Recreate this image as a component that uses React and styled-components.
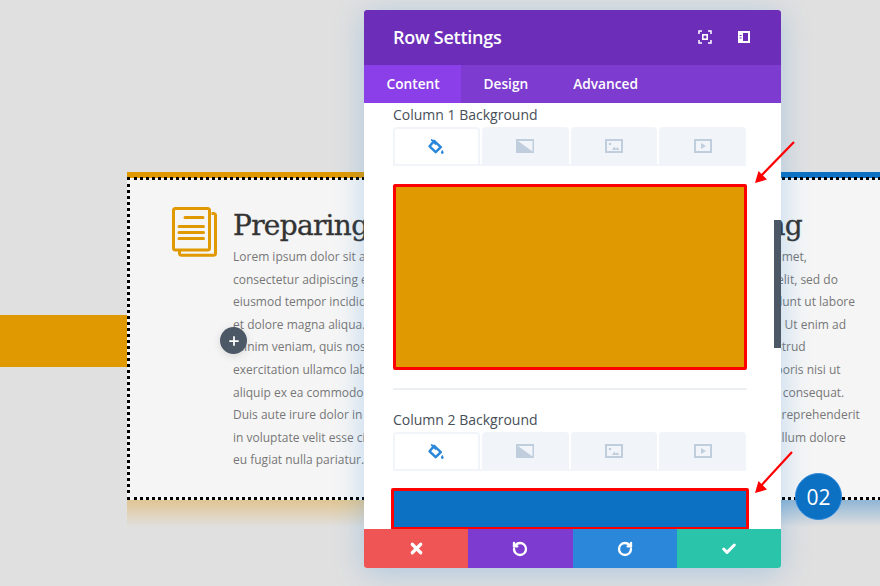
import React from "react";
import styled, { createGlobalStyle } from "styled-components";
import { X, RotateCcw, RotateCw, Check, Plus } from "lucide-react";

const Global = createGlobalStyle`
  html, body { margin: 0; padding: 0; background: #e0e0e0; overflow: hidden; }
  * { box-sizing: border-box; }
`;

const AMBER = "#e09900";
const BLUE = "#0c71c3";

const Stage = styled.div`
  position: relative;
  width: 880px;
  height: 586px;
  overflow: hidden;
  display: flex;
  align-items: flex-start;
  background: #e0e0e0;
  font-family: "Open Sans", sans-serif;
`;
const Band = styled.div`
  flex: 0 0 127px;
  height: 52px;
  margin-top: 315px;
  background: ${AMBER};
`;
const Row = styled.section`
  flex: 0 0 832px;
  position: relative;
  margin-top: 172px;
  display: grid;
  grid-template-columns: 416px 416px;
  &::after {
    content: "";
    position: absolute;
    inset: 5px 0 0 0;
    border: 3px dotted #000;
    pointer-events: none;
  }
`;
const Column = styled.article`
  position: relative;
  height: 328px;
  border-top: 6px solid ${(p) => p.$color};
  background: #f5f5f5;
  display: flex;
  gap: 16px;
  padding: 30px 0 0 45px;
  &::before {
    content: "";
    position: absolute;
    left: 0;
    right: 0;
    top: 100%;
    height: 27px;
    background: linear-gradient(${(p) => p.$shadow}, rgba(224, 224, 224, 0));
  }
`;
const DocIcon = styled.svg`
  flex: 0 0 45px;
  width: 45px;
  height: 50px;
  margin-top: -1px;
`;
const ColumnText = styled.div`
  width: 240px;
  flex: none;
`;
const Heading = styled.h2`
  margin: 0;
  height: 38px;
  font: 400 28px/36px "DejaVu Serif", serif;
  letter-spacing: -0.7px;
  -webkit-text-stroke: 0.35px #333;
  color: #333;
  white-space: nowrap;
`;
const Copy = styled.p`
  margin: 0;
  font-size: 12px;
  line-height: 22.6px;
  color: #777;
  white-space: pre-line;
`;
const AddButton = styled.div`
  position: absolute;
  left: 220px;
  top: 327px;
  width: 27px;
  height: 27px;
  border-radius: 50%;
  background: #4c5866;
  color: #fff;
  display: flex;
  align-items: center;
  justify-content: center;
  box-shadow: 0 2px 8px rgba(0, 0, 0, 0.12);
`;
const SideHandle = styled.div`
  position: absolute;
  left: 774px;
  top: 220px;
  width: 7px;
  height: 128px;
  background: #4c5866;
`;
const Modal = styled.div`
  position: absolute;
  left: 364px;
  top: 10px;
  width: 417px;
  height: 558px;
  border-radius: 3px;
  overflow: hidden;
  display: flex;
  flex-direction: column;
  background: #fff;
  box-shadow: 0 5px 30px rgba(43, 135, 218, 0.28);
`;
const ModalHeader = styled.header`
  flex: 0 0 55px;
  display: flex;
  align-items: center;
  padding: 0 29px 2px;
  background: #6c2eb9;
  color: #fff;
`;
const ModalTitle = styled.h1`
  margin: 0;
  flex: 1;
  font-size: 18px;
  font-weight: 600;
  letter-spacing: -0.25px;
`;
const HeaderIcons = styled.div`
  display: flex;
  gap: 25px;
  margin-right: 1px;
`;
const Tabs = styled.nav`
  flex: 0 0 38px;
  display: flex;
  background: #7d3bcf;
`;
const Tab = styled.div`
  display: flex;
  align-items: center;
  padding: 0 22.5px 1px;
  width: ${(p) => (p.$active ? "97px" : "auto")};
  background: ${(p) => (p.$active ? "#8b3fe8" : "transparent")};
  color: #fff;
  font-size: 13.7px;
  font-weight: 600;
  white-space: nowrap;
`;
const ModalBody = styled.div`
  flex: 1;
  min-height: 0;
  overflow: hidden;
  padding: 0 34px 0 29px;
  display: flex;
  flex-direction: column;
`;
const OptionLabel = styled.div`
  font-size: 14px;
  line-height: 20px;
  color: #484f58;
  margin-top: ${(p) => p.$top}px;
`;
const BgTabs = styled.div`
  margin: 2px 1px 0 0;
  height: 39px;
  flex: none;
  display: grid;
  grid-template-columns: repeat(4, 1fr);
  gap: 2px;
  border-bottom: 2px solid #f1f5f9;
`;
const BgTab = styled.div`
  display: flex;
  align-items: center;
  justify-content: center;
  background: ${(p) => (p.$active ? "#fff" : "#f1f5f9")};
  border: ${(p) => (p.$active ? "2px solid #f1f5f9" : "none")};
  border-bottom: none;
  border-radius: 4px 4px 0 0;
`;
const Swatch = styled.div`
  flex: none;
  height: ${(p) => p.$height}px;
  margin: ${(p) => p.$top}px ${(p) => -p.$out}px 0;
  background: ${(p) => p.$color};
  border: 3px solid #f00;
  border-radius: 2px;
`;
const Divider = styled.hr`
  flex: none;
  margin: 18px 0 0;
  border: 0;
  height: 2px;
  background: #edf0f3;
`;
const Footer = styled.footer`
  flex: 0 0 39px;
  display: grid;
  grid-template-columns: repeat(4, 1fr);
`;
const FooterButton = styled.button`
  border: 0;
  padding: 0;
  display: flex;
  align-items: center;
  justify-content: center;
  color: #fff;
  background: ${(p) => p.$color};
`;
const Badge = styled.div`
  position: absolute;
  left: 795px;
  top: 473px;
  width: 47px;
  height: 47px;
  border-radius: 50%;
  background: ${BLUE};
  border: 1px solid #2b87da;
  color: #fff;
  font-size: 21px;
  display: flex;
  align-items: center;
  justify-content: center;
`;
const Arrow = styled.svg`
  position: absolute;
  left: ${(p) => p.$x}px;
  top: ${(p) => p.$y}px;
  width: 42px;
  height: 46px;
`;

const Doc = ({ color }) => (
  <DocIcon viewBox="0 0 45 50" fill="none" stroke={color} strokeWidth="3">
    <path d="M39.5 6.5H42a1.7 1.7 0 0 1 1.5 1.6v38.2a2 2 0 0 1-2 2H9.5a2 2 0 0 1-2-2V43" strokeLinejoin="round" />
    <rect x="1.5" y="1.5" width="36" height="41.5" rx="2" />
    <path d="M13 10.5h18M7 19.5h24.5M7 25.5h24.5M7 31.5h24.5" strokeLinecap="round" />
  </DocIcon>
);
const FillIcon = () => (
  <svg width="16" height="16" viewBox="0 0 15 15" fill="none">
    <path d="M5.8 1.8 12 7.6 7.2 12.4 1.5 6.8Z" stroke="#2b87da" strokeWidth="2.3" strokeLinejoin="round" />
    <path d="M3.6 1 7 4.6" stroke="#2b87da" strokeWidth="1.8" strokeLinecap="round" />
    <path d="M13.4 10c.8 1.2 1.3 2 1.3 2.7a1.3 1.3 0 0 1-2.6 0c0-.7.5-1.5 1.3-2.7Z" fill="#2b87da" />
  </svg>
);
const GradientIcon = () => (
  <svg width="18" height="14" viewBox="0 0 18 14">
    <rect width="18" height="14" fill="#bfcddd" />
    <path d="M2 2h14.5v10.5Z" fill="#f1f5f9" />
  </svg>
);
const ImageIcon = () => (
  <svg width="18" height="14" viewBox="0 0 18 14" fill="none">
    <rect x="1" y="1" width="16" height="12" stroke="#bfcddd" strokeWidth="2" />
    <circle cx="5" cy="5" r="1.3" fill="#bfcddd" />
    <path d="M7 11l2.4-3.4L11 10l1.4-2 2 3Z" fill="#bfcddd" />
  </svg>
);
const VideoIcon = () => (
  <svg width="18" height="14" viewBox="0 0 18 14" fill="none">
    <rect x="1" y="1" width="16" height="12" stroke="#bfcddd" strokeWidth="2" />
    <path d="M7 4l5 3-5 3Z" fill="#bfcddd" />
  </svg>
);
const BgSwitcher = () => (
  <BgTabs>
    <BgTab $active><FillIcon /></BgTab>
    <BgTab><GradientIcon /></BgTab>
    <BgTab><ImageIcon /></BgTab>
    <BgTab><VideoIcon /></BgTab>
  </BgTabs>
);
const RedArrow = ({ x, y, d }) => (
  <Arrow $x={x} $y={y} viewBox="0 0 42 46" fill="none">
    <path d={d} stroke="#f00" strokeWidth="2.2" />
    <path d="M1 44 4.5 32 13 40.5Z" fill="#f00" />
  </Arrow>
);

const copy = `Lorem ipsum dolor sit amet,
consectetur adipiscing elit, sed do
eiusmod tempor incididunt ut labore
et dolore magna aliqua. Ut enim ad
minim veniam, quis nostrud
exercitation ullamco laboris nisi ut
aliquip ex ea commodo consequat.
Duis aute irure dolor in reprehenderit
in voluptate velit esse cillum dolore
eu fugiat nulla pariatur.`;

export default function App() {
  return (
    <Stage>
      <Global />
      <Band />
      <Row>
        <Column $color={AMBER} $shadow="rgba(224,160,40,.42)">
          <Doc color={AMBER} />
          <ColumnText>
            <Heading>Preparing</Heading>
            <Copy>{copy}</Copy>
          </ColumnText>
        </Column>
        <Column $color={BLUE} $shadow="rgba(12,113,195,.38)">
          <Doc color={BLUE} />
          <ColumnText>
            <Heading>Developing</Heading>
            <Copy>{copy}</Copy>
          </ColumnText>
        </Column>
      </Row>
      <AddButton><Plus size={14} strokeWidth={3} /></AddButton>
      <Modal>
        <ModalHeader>
          <ModalTitle>Row Settings</ModalTitle>
          <HeaderIcons>
            <svg width="14" height="14" viewBox="0 0 14 14" fill="none" stroke="#fff" strokeWidth="1.5">
              <path d="M1 4V1h3M10 1h3v3M13 10v3h-3M4 13H1v-3" />
              <rect x="4.8" y="4.8" width="4.4" height="4.4" strokeWidth="1.6" />
            </svg>
            <svg width="14" height="14" viewBox="0 0 14 14">
              <path fillRule="evenodd" fill="#fff" d="M1 1h12v12H1ZM6 3v8h5V3Z" />
              <path fill="#6c2eb9" d="M2.6 5h2v.9h-2zM2.6 7.5h2v.9h-2z" />
            </svg>
          </HeaderIcons>
        </ModalHeader>
        <Tabs>
          <Tab $active>Content</Tab>
          <Tab>Design</Tab>
          <Tab>Advanced</Tab>
        </Tabs>
        <ModalBody>
          <OptionLabel $top={2}>Column 1 Background</OptionLabel>
          <BgSwitcher />
          <Swatch $height={186} $top={18} $color={AMBER} $out={0} />
          <Divider />
          <OptionLabel $top={20}>Column 2 Background</OptionLabel>
          <BgSwitcher />
          <Swatch $height={42} $top={17} $color={BLUE} $out={2} />
        </ModalBody>
        <Footer>
          <FooterButton $color="#ef5555"><X size={17} strokeWidth={4.5} /></FooterButton>
          <FooterButton $color="#7e3bd0"><RotateCcw size={16} strokeWidth={3.5} /></FooterButton>
          <FooterButton $color="#2b87da"><RotateCw size={16} strokeWidth={3.5} /></FooterButton>
          <FooterButton $color="#29c4a9"><Check size={16} strokeWidth={4.5} /></FooterButton>
        </Footer>
      </Modal>
      <SideHandle />
      <RedArrow x={754} y={139} d="M40 3 5 39" />
      <RedArrow x={754} y={449} d="M38 3 5 39" />
      <Badge>02</Badge>
    </Stage>
  );
}
